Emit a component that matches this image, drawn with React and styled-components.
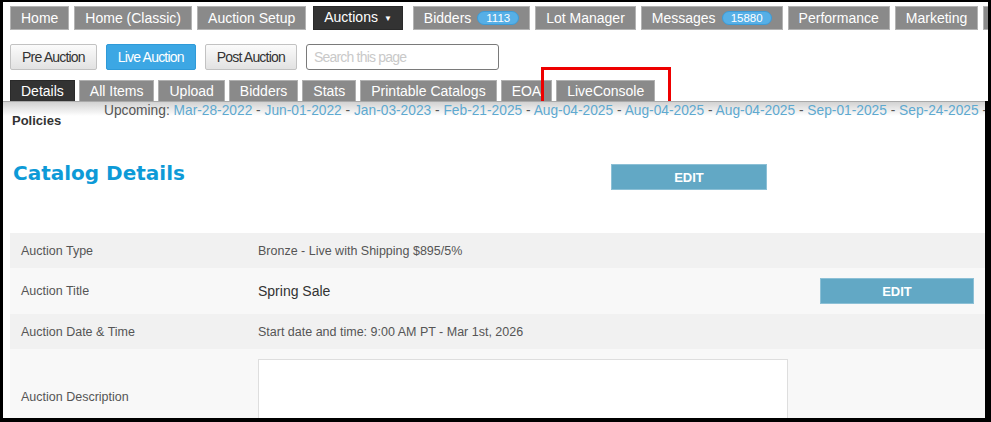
import React from "react";
import styled, { createGlobalStyle } from "styled-components";

const GlobalStyle = createGlobalStyle`
  html, body {
    margin: 0;
    padding: 0;
    background: #000;
  }
  body {
    font-family: "Liberation Sans", Arial, sans-serif;
  }
  * {
    box-sizing: border-box;
  }
`;

const Frame = styled.div`
  width: 991px;
  height: 422px;
  padding: 2px 3px 4px 3px;
  background: #000;
`;

const Screen = styled.div`
  height: 100%;
  display: flex;
  flex-direction: column;
  overflow: hidden;
  background: #000;
`;

const Header = styled.div`
  position: relative;
  height: 99px;
  flex-shrink: 0;
  overflow: hidden;
  background: #fff;
`;

const NavBar = styled.div`
  display: flex;
  gap: 5px;
  padding: 4px 0 0 7px;
  white-space: nowrap;
`;

const NavTab = styled.div`
  display: flex;
  align-items: center;
  gap: 6px;
  flex-shrink: 0;
  height: 24px;
  padding: 0 10px;
  border: 1px solid ${(p) => (p.$active ? "#2a2a2a" : "#b3b3b3")};
  background: ${(p) => (p.$active ? "#333" : "#8a8a8a")};
  color: #fff;
  font-size: 14px;
  line-height: 22px;
  margin: ${(p) => (p.$active ? "0 5px 0 2px" : "0")};
`;

const Caret = styled.span`
  font-size: 8px;
  margin-left: 6px;
  vertical-align: 1px;
`;

const Badge = styled.span`
  display: inline-block;
  height: 14px;
  padding: 0 8px;
  border-radius: 8px;
  background: #56afe6;
  border: 1px solid #3d9bd6;
  color: #fff;
  font-size: 11.5px;
  line-height: 12px;
`;

const ActionBar = styled.div`
  display: flex;
  align-items: center;
  gap: 9px;
  margin-top: 14px;
  padding-left: 7px;
`;

const ModeButton = styled.button`
  height: 26px;
  padding: 0 11px;
  border-radius: 2px;
  border: 1px solid ${(p) => (p.$active ? "#2f9ad8" : "#c2c2c2")};
  background: ${(p) =>
    p.$active ? "#3ca7e4" : "linear-gradient(#fbfbfb, #e2e2e2)"};
  color: ${(p) => (p.$active ? "#fff" : "#333")};
  font-family: "Liberation Sans", Arial, sans-serif;
  font-size: 14px;
  letter-spacing: -0.8px;
`;

const SearchBox = styled.input`
  width: 193px;
  height: 26px;
  padding: 0 7px;
  border: 1px solid #7a7a7a;
  border-radius: 3px;
  background: #fff;
  font-family: "Liberation Sans", Arial, sans-serif;
  font-size: 14px;
  letter-spacing: -0.8px;
  outline: none;

  &::placeholder {
    color: #c9c9c9;
  }
`;

const SubTabs = styled.div`
  display: flex;
  gap: 4px;
  margin-top: 10px;
  padding-left: 7px;
  white-space: nowrap;
`;

const SubTab = styled.div`
  height: 21px;
  padding: 0 10px;
  border: 1px solid ${(p) => (p.$active ? "#2a2a2a" : "#b0b0b0")};
  border-bottom: none;
  background: ${(p) => (p.$active ? "#333" : "#8a8a8a")};
  color: #fff;
  font-size: 14px;
  line-height: 20px;
`;

const Highlight = styled.div`
  position: absolute;
  top: 65px;
  left: 538px;
  width: 130px;
  height: 44px;
  border: 3px solid #ee0000;
  pointer-events: none;
`;

const Content = styled.div`
  flex: 1;
  margin-right: 3px;
  overflow: hidden;
  border-top: 1px solid #a9a9a9;
  background: linear-gradient(#d2d2d2, #fff) top / 100% 14px no-repeat, #fff;
`;

const Upcoming = styled.div`
  padding: 3px 0 0 101px;
  height: 14px;
  line-height: 12px;
  font-size: 13.75px;
  color: #555;
  white-space: nowrap;
`;

const DateLink = styled.span`
  color: #5ea9d0;
`;

const Policies = styled.div`
  margin-top: -2px;
  padding-left: 9px;
  font-size: 13px;
  font-weight: bold;
  line-height: 13px;
  color: #333;
`;

const TitleRow = styled.div`
  display: grid;
  grid-template-columns: 598px 156px;
  align-items: start;
  margin-top: 36px;
  padding-left: 10px;
`;

const Heading = styled.h2`
  margin: 0;
  font-family: "DejaVu Sans", Verdana, sans-serif;
  font-size: 20px;
  font-weight: bold;
  line-height: 20px;
  color: #0d9ad7;
`;

const EditButton = styled.button`
  width: ${(p) => p.$width || 156}px;
  height: 26px;
  margin-top: ${(p) => p.$offset || 0}px;
  border: 1px solid #8cc0d6;
  background: #62a8c5;
  color: #fff;
  font-family: "Liberation Sans", Arial, sans-serif;
  font-size: 13px;
  font-weight: bold;
`;

const DetailsTable = styled.div`
  margin: 43px 0 0 7px;
`;

const Row = styled.div`
  display: grid;
  grid-template-columns: 248px 1fr 165px;
  align-items: center;
  min-height: ${(p) => p.$height}px;
  background: ${(p) => (p.$shade ? "#f1f1f1" : "#f8f8f8")};
`;

const Label = styled.div`
  padding-left: 11px;
  font-size: 12.5px;
  color: #555;
`;

const Value = styled.div`
  font-size: ${(p) => (p.$large ? 14 : 12.5)}px;
  color: ${(p) => (p.$large ? "#333" : "#555")};
`;

const DescriptionBox = styled.div`
  width: 530px;
  height: 75px;
  margin: 10px 0;
  border: 1px solid #dedede;
  background: #fff;
`;

const navItems = [
  { label: "Home" },
  { label: "Home (Classic)" },
  { label: "Auction Setup" },
  { label: "Auctions", active: true, caret: true },
  { label: "Bidders", badge: "1113" },
  { label: "Lot Manager" },
  { label: "Messages", badge: "15880" },
  { label: "Performance" },
  { label: "Marketing" },
  { label: "Settings" },
];

const subTabs = [
  "Details",
  "All Items",
  "Upload",
  "Bidders",
  "Stats",
  "Printable Catalogs",
  "EOA",
  "LiveConsole",
];

const upcomingDates = [
  "Mar-28-2022",
  "Jun-01-2022",
  "Jan-03-2023",
  "Feb-21-2025",
  "Aug-04-2025",
  "Aug-04-2025",
  "Aug-04-2025",
  "Sep-01-2025",
  "Sep-24-2025",
  "Oct-15-2025",
];

const App = () => {
  return (
    <Frame>
      <GlobalStyle />
      <Screen>
        <Header>
          <NavBar>
            {navItems.map((item) => (
              <NavTab key={item.label} $active={item.active}>
                <span>
                  {item.label}
                  {item.caret && <Caret>▼</Caret>}
                </span>
                {item.badge && <Badge>{item.badge}</Badge>}
              </NavTab>
            ))}
          </NavBar>
          <ActionBar>
            <ModeButton>Pre Auction</ModeButton>
            <ModeButton $active>Live Auction</ModeButton>
            <ModeButton>Post Auction</ModeButton>
            <SearchBox placeholder="Search this page" />
          </ActionBar>
          <SubTabs>
            {subTabs.map((tab, i) => (
              <SubTab key={tab} $active={i === 0}>
                {tab}
              </SubTab>
            ))}
          </SubTabs>
          <Highlight />
        </Header>

        <Content>
          <Upcoming>
            Upcoming:{" "}
            {upcomingDates.map((d, i) => (
              <React.Fragment key={i}>
                <DateLink>{d}</DateLink>
                {" - "}
              </React.Fragment>
            ))}
          </Upcoming>
          <Policies>Policies</Policies>

          <TitleRow>
            <Heading>Catalog Details</Heading>
            <EditButton $offset={1}>EDIT</EditButton>
          </TitleRow>

          <DetailsTable>
            <Row $shade $height={35}>
              <Label>Auction Type</Label>
              <Value>Bronze - Live with Shipping $895/5%</Value>
            </Row>
            <Row $height={46}>
              <Label>Auction Title</Label>
              <Value $large>Spring Sale</Value>
              <EditButton $width={154}>EDIT</EditButton>
            </Row>
            <Row $shade $height={35}>
              <Label>Auction Date &amp; Time</Label>
              <Value>Start date and time: 9:00 AM PT - Mar 1st, 2026</Value>
            </Row>
            <Row $height={95}>
              <Label>Auction Description</Label>
              <DescriptionBox />
            </Row>
          </DetailsTable>
        </Content>
      </Screen>
    </Frame>
  );
};

export default App;
